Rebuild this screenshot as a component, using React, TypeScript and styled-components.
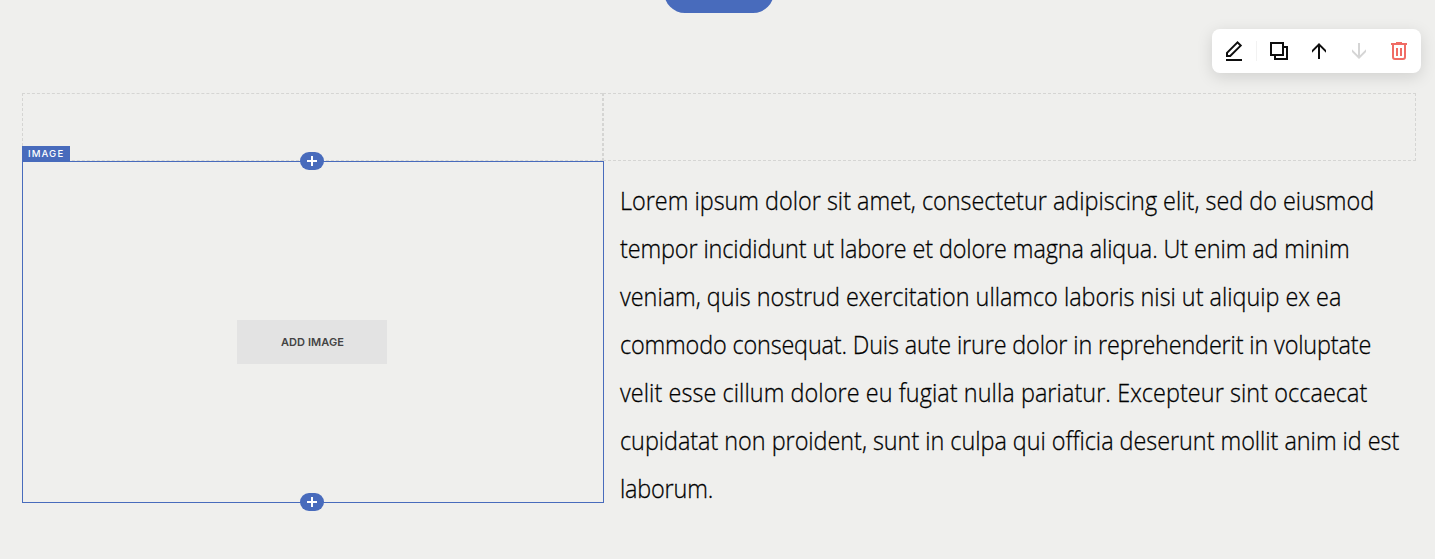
import React from "react";
import styled, { createGlobalStyle } from "styled-components";

const BLUE = "#486bbc";

const GlobalStyle = createGlobalStyle`
  * { box-sizing: border-box; }
  body { margin: 0; background: #efefed; font-family: Inter, "Liberation Sans", sans-serif; }
`;

const Page = styled.main`
  position: relative;
  height: 559px;
  overflow: hidden;
  background: #efefed;
`;

const PillButton = styled.div`
  width: 110px;
  height: 13px;
  margin-left: 664px;
  overflow: hidden;
  display: flex;
  align-items: flex-end;
  &::after {
    content: "";
    flex: 1 0 auto;
    height: 42px;
    border-radius: 21px;
    background: ${BLUE};
  }
`;

const Toolbar = styled.div`
  width: 209px;
  height: 44px;
  margin: 16px 14px 0 auto;
  padding: 0 10px;
  display: flex;
  align-items: center;
  gap: 16px;
  border-radius: 8px;
  background: #fff;
  box-shadow: 0 4px 16px rgba(0, 0, 0, 0.13);
`;

const Divider = styled.i`
  width: 1px;
  height: 20px;
  margin: 0 -6px 0 -6px;
  background: #f2f2f2;
`;

const Icon = styled.svg<{ $color?: string }>`
  flex: none;
  width: 24px;
  height: 24px;
  color: ${(p) => p.$color ?? "#0e0e0e"};
`;

const GridRow = styled.div`
  display: flex;
  margin: 20px 19px 0 22px;
`;

const EmptyCell = styled.div<{ $width: number }>`
  width: ${(p) => p.$width}px;
  height: 68px;
  border: 1px dashed #d5d5d3;
`;

const Content = styled.div`
  display: flex;
  margin-left: 22px;
`;

const ImageBlock = styled.section`
  position: relative;
  flex: none;
  width: 582px;
  height: 342px;
  padding-right: 2px;
  border: 1px solid ${BLUE};
  display: flex;
  justify-content: center;
  align-items: center;
`;

const BlockTag = styled.span`
  position: absolute;
  left: -1px;
  top: -16px;
  width: 48px;
  height: 16px;
  padding-left: 6px;
  background: ${BLUE};
  color: #fff;
  font-size: 9.6px;
  font-weight: 500;
  line-height: 15px;
  letter-spacing: 1.1px;
`;

const AddBlock = styled.button<{ $edge: "top" | "bottom" }>`
  position: absolute;
  ${(p) => (p.$edge === "top" ? "top: -10px" : "bottom: -9px")};
  left: 277px;
  width: 24px;
  height: 18px;
  padding: 0;
  border: 0;
  border-radius: 9px;
  background: ${BLUE};
  svg { display: block; }
`;

const AddImage = styled.button`
  width: 150px;
  height: 44px;
  margin-top: 20px;
  padding: 0 0 0 1px;
  border: 0;
  background: #e3e3e3;
  color: #444;
  font: 600 11px/44px Inter, sans-serif;
  letter-spacing: 0.08px;
`;

const Copy = styled.p`
  flex: none;
  margin: 15px 0 0 15.6px;
  color: #000;
  font: 300 26px/48px "Open Sans", sans-serif;
  -webkit-text-stroke: 0.3px #000;
  white-space: nowrap;
  transform: scaleX(0.9);
  transform-origin: 0 0;
`;

const Line = styled.span<{ $spacing: number }>`
  display: block;
  width: max-content;
  letter-spacing: ${(p) => p.$spacing}px;
`;

const lines: [string, number][] = [
  ["Lorem ipsum dolor sit amet, consectetur adipiscing elit, sed do eiusmod", 0],
  ["tempor incididunt ut labore et dolore magna aliqua. Ut enim ad minim", -0.12],
  ["veniam, quis nostrud exercitation ullamco laboris nisi ut aliquip ex ea", -0.01],
  ["commodo consequat. Duis aute irure dolor in reprehenderit in voluptate", -0.165],
  ["velit esse cillum dolore eu fugiat nulla pariatur. Excepteur sint occaecat", 0.08],
  ["cupidatat non proident, sunt in culpa qui officia deserunt mollit anim id est", -0.03],
  ["laborum.", -0.2],
];

const Plus = () => (
  <svg width="24" height="18" viewBox="0 0 24 18">
    <path d="M7 9h10M12 4v10" stroke="#fff" strokeWidth="2" />
  </svg>
);

export default function App() {
  return (
    <Page>
      <GlobalStyle />
      <PillButton />
      <Toolbar>
        <Icon viewBox="0 0 24 24" fill="none" stroke="currentColor" strokeWidth="2">
          <path d="M5 17v-3.2L15.5 3.4l3.2 3.2L8.2 17zM4 21h16" />
        </Icon>
        <Divider />
        <Icon viewBox="0 0 24 24" fill="none" stroke="currentColor" strokeWidth="2">
          <path d="M4 4h12v12H4zM8 16v4h12V8h-4" />
        </Icon>
        <Icon viewBox="0 0 24 24" fill="currentColor">
          <path d="M11 20V7.8l-6 6V11l7-7 7 7v2.8l-6-6V20z" />
        </Icon>
        <Icon viewBox="0 0 24 24" fill="currentColor" $color="#d5d5d5">
          <path d="M11 4v12.2l-6-6V13l7 7 7-7v-2.8l-6 6V4z" />
        </Icon>
        <Icon viewBox="0 0 24 24" fill="none" stroke="currentColor" strokeWidth="2" $color="#f06c65">
          <path d="M4 5h16M9 4h6M6 5v13q0 2 2 2h8q2 0 2-2V5M10 9v8M14 9v8" />
        </Icon>
      </Toolbar>
      <GridRow>
        <EmptyCell $width={581} />
        <EmptyCell $width={813} />
      </GridRow>
      <Content>
        <ImageBlock>
          <BlockTag>IMAGE</BlockTag>
          <AddBlock $edge="top" aria-label="Add block above"><Plus /></AddBlock>
          <AddImage>ADD IMAGE</AddImage>
          <AddBlock $edge="bottom" aria-label="Add block below"><Plus /></AddBlock>
        </ImageBlock>
        <Copy>
          {lines.map(([text, spacing]) => (
            <Line key={text} $spacing={spacing}>{text}</Line>
          ))}
        </Copy>
      </Content>
    </Page>
  );
}
